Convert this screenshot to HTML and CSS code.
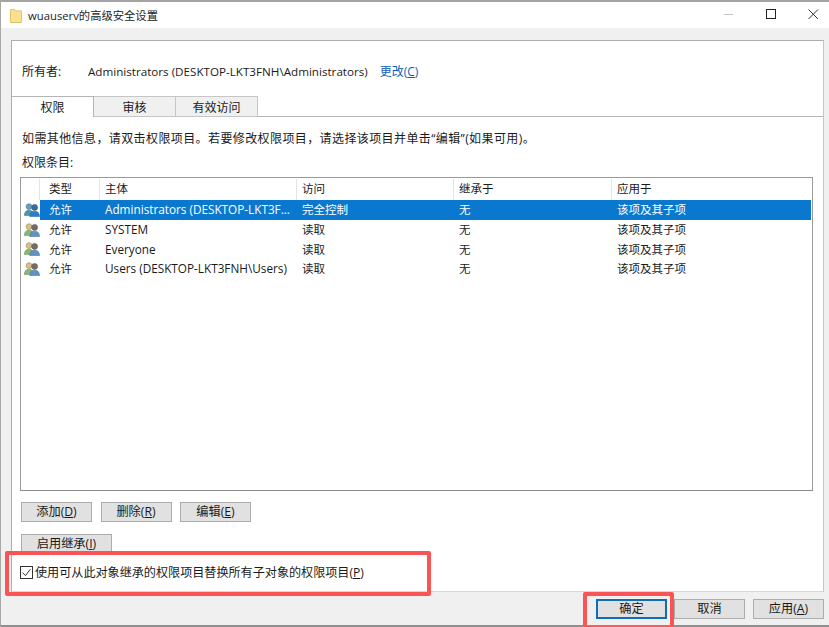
FILE: index.html
```html
<!DOCTYPE html>
<html lang="zh-CN">
<head>
<meta charset="utf-8">
<title>wuauserv的高级安全设置</title>
<link rel="stylesheet" href="styles.css">
</head>
<body>
<svg class="defs" width="0" height="0" aria-hidden="true">
  <defs>
    <symbol id="users" viewBox="0 0 16 14">
      <circle cx="5" cy="3.6" r="2.9" fill="#d9c084" stroke="#8f8f6a" stroke-width=".6"/>
      <path d="M.4 12.6c0-3.6 1.6-5.4 4.6-5.4s4.4 1.8 4.4 5.4z" fill="#8fb573" stroke="#6f8f60" stroke-width=".6"/>
      <circle cx="10.6" cy="4.4" r="3" fill="#7a6a58" stroke="#54616e" stroke-width=".6"/>
      <path d="M5.8 13.6c0-3.6 1.8-5.4 4.8-5.4s4.9 1.8 4.9 5.4z" fill="#5f93c4" stroke="#47729c" stroke-width=".6"/>
    </symbol>
    <symbol id="users-sel" viewBox="0 0 16 14">
      <circle cx="5" cy="3.6" r="2.9" fill="#6d9dbb" stroke="#4d7b9c" stroke-width=".6"/>
      <path d="M.4 12.6c0-3.6 1.6-5.4 4.6-5.4s4.4 1.8 4.4 5.4z" fill="#4f93a8" stroke="#3f7c92" stroke-width=".6"/>
      <circle cx="10.6" cy="4.4" r="3" fill="#3a6a98" stroke="#2f5f8c" stroke-width=".6"/>
      <path d="M5.8 13.6c0-3.6 1.8-5.4 4.8-5.4s4.9 1.8 4.9 5.4z" fill="#2f7cc4" stroke="#2766a4" stroke-width=".6"/>
    </symbol>
  </defs>
</svg>
<div class="window">
  <header class="titlebar">
    <svg class="folder" width="12" height="15" viewBox="0 0 12 15" aria-hidden="true">
      <path d="M.5 1.5h4l1 1.4h6v11.6H.5z" fill="#fbe08f" stroke="#e2c368"/>
    </svg>
    <span class="title">wuauserv的高级安全设置</span>
    <div class="controls">
      <svg class="ctl" width="42" height="12" viewBox="0 0 42 12" aria-hidden="true"><path d="M0 5.5h9" stroke="#c4c4c4" stroke-width="1"/></svg>
      <svg class="ctl" width="42" height="12" viewBox="0 0 42 12" aria-hidden="true"><rect x=".5" y=".5" width="9" height="9" fill="none" stroke="#222"/></svg>
      <svg class="ctl" width="11" height="12" viewBox="0 0 11 12" aria-hidden="true"><path d="M.5 .5l9.5 9.5M10 .5L.5 10" fill="none" stroke="#333"/></svg>
    </div>
  </header>

  <main class="panel">
    <div class="owner">
      <span class="owner-label">所有者:</span>
      <span class="latin">Administrators (DESKTOP-LKT3FNH\Administrators)</span>
      <a class="link">更改(<u>C</u>)</a>
    </div>

    <nav class="tabs">
      <span class="tab active">权限</span>
      <span class="tab">审核</span>
      <span class="tab">有效访问</span>
    </nav>

    <section class="content">
      <p class="hint">如需其他信息，请双击权限项目。若要修改权限项目，请选择该项目并单击“编辑”(如果可用)。</p>
      <p class="list-label">权限条目:</p>

      <div class="list">
        <div class="row head">
          <span class="cell"></span>
          <span class="cell">类型</span>
          <span class="cell">主体</span>
          <span class="cell">访问</span>
          <span class="cell">继承于</span>
          <span class="cell">应用于</span>
        </div>
        <div class="row item selected">
          <svg class="user-icon" aria-hidden="true"><use href="#users-sel"/></svg>
          <span class="cell">允许</span>
          <span class="cell name">Administrators (DESKTOP-LKT3F...</span>
          <span class="cell">完全控制</span>
          <span class="cell">无</span>
          <span class="cell">该项及其子项</span>
        </div>
        <div class="row item">
          <svg class="user-icon" aria-hidden="true"><use href="#users"/></svg>
          <span class="cell">允许</span>
          <span class="cell name">SYSTEM</span>
          <span class="cell">读取</span>
          <span class="cell">无</span>
          <span class="cell">该项及其子项</span>
        </div>
        <div class="row item">
          <svg class="user-icon" aria-hidden="true"><use href="#users"/></svg>
          <span class="cell">允许</span>
          <span class="cell name">Everyone</span>
          <span class="cell">读取</span>
          <span class="cell">无</span>
          <span class="cell">该项及其子项</span>
        </div>
        <div class="row item">
          <svg class="user-icon" aria-hidden="true"><use href="#users"/></svg>
          <span class="cell">允许</span>
          <span class="cell name">Users (DESKTOP-LKT3FNH\Users)</span>
          <span class="cell">读取</span>
          <span class="cell">无</span>
          <span class="cell">该项及其子项</span>
        </div>
      </div>

      <div class="actions">
        <button class="btn">添加(<u>D</u>)</button>
        <button class="btn">删除(<u>R</u>)</button>
        <button class="btn">编辑(<u>E</u>)</button>
      </div>
      <div class="inherit">
        <button class="btn wide">启用继承(<u>I</u>)</button>
      </div>
      <label class="replace">
        <svg class="check" width="13" height="13" viewBox="0 0 13 13" aria-hidden="true">
          <rect x=".5" y=".5" width="12" height="12" fill="#fff" stroke="#333"/>
          <path d="M2.6 6.6l2.8 3 5-6.4" fill="none" stroke="#333" stroke-width="1"/>
        </svg>
        <span>使用可从此对象继承的权限项目替换所有子对象的权限项目(<u>P</u>)</span>
      </label>
    </section>
  </main>

  <footer class="footer">
    <button class="btn primary">确定</button>
    <button class="btn">取消</button>
    <button class="btn">应用(<u>A</u>)</button>
  </footer>
</div>
<div class="mark mark-check"></div>
<div class="mark mark-ok"></div>
</body>
</html>
```
FILE: styles.css
```css
* { box-sizing: border-box; }
html, body { margin: 0; padding: 0; }
body {
  width: 829px;
  height: 627px;
  overflow: hidden;
  position: relative;
  font-family: "Open Sans", "Noto Sans CJK SC", sans-serif;
  font-size: 12px;
  color: #1a1a1a;
  background: #f0f0f0;
}
.defs { position: absolute; }
.window {
  width: 829px;
  height: 627px;
  display: flex;
  flex-direction: column;
  border-top: 2px solid #a3a3a3;
  border-left: 1px solid #a8a8a8;
  border-bottom: 2px solid #8f8f8f;
  background: #f0f0f0;
}
.titlebar {
  height: 26px;
  flex: none;
  display: flex;
  align-items: center;
  padding-left: 9px;
  background: #fff;
}
.folder { flex: none; }
.title { margin-left: 6px; font-size: 11.3px; color: #222; }
.controls { margin-left: auto; display: flex; align-items: center; padding-right: 10px; }
.ctl { flex: none; display: block; }
.panel {
  margin: 12px 5px 0 10px;
  height: 552px;
  flex: none;
  background: #fff;
  border: 1px solid #adadad;
  border-right-color: #c4c4c4;
  border-bottom-color: #d6d6d6;
  display: flex;
  flex-direction: column;
}
.owner {
  height: 55px;
  flex: none;
  display: flex;
  align-items: flex-end;
  padding: 0 0 16px 10px;
  line-height: 16px;
}
.owner-label { width: 66px; }
.latin { font-size: 11.65px; }
.link { margin-left: 12px; color: #0f5fb5; }
.tabs {
  height: 21px;
  flex: none;
  display: flex;
  border-bottom: 1px solid #b4b4b4;
}
.tab {
  width: 82px;
  height: 21px;
  display: flex;
  align-items: center;
  justify-content: center;
  background: #f0f0f0;
  border: 1px solid #c6c6c6;
  border-left: 0;
}
.tab.active {
  background: #fff;
  border-color: #b4b4b4;
  border-bottom: 0;
  position: relative;
  z-index: 1;
}
.content { flex: 1; padding: 0 10px 0 8px; min-height: 0; }
.hint { margin: 13px 0 0 2px; line-height: 17px; letter-spacing: .4px; }
.list-label { margin: 7px 0 0 2px; line-height: 17px; }
.list {
  margin-top: 6px;
  height: 314px;
  background: #fff;
  border: 1px solid #9a9a9a;
  border-bottom-color: #8a8a8a;
  padding-right: 1px;
  font-size: 11.5px;
}
.row {
  display: grid;
  grid-template-columns: 19px 60px 197px 157px 158px 1fr;
  align-items: center;
}
.head { height: 22px; }
.head .cell { height: 21px; line-height: 20px; border-right: 1px solid #e4e4e4; }
.head .cell:last-child { border-right: 0; }
.cell { padding-left: 5px; white-space: nowrap; overflow: hidden; }
.row .cell:nth-child(2) { padding-left: 9px; }
.cell.name { font-size: 11.75px; }
.item { height: 19.7px; line-height: 19px; }
.selected { background: linear-gradient(#0b78d0, #0b78d0) 19px 0 / 100% 100% no-repeat; color: #fff; }
.user-icon { width: 16px; height: 14px; margin-left: 3px; }
.actions { display: flex; gap: 8.5px; margin: 11px 0 0 1px; }
.inherit { margin: 12px 0 0 1px; }
.btn {
  width: 71px;
  height: 20px;
  padding: 0 0 1px;
  background: #e1e1e1;
  border: 1px solid #adadad;
  font: inherit;
  font-size: 12.2px;
  color: #1a1a1a;
  line-height: 16px;
}
.wide { width: 91px; }
.replace { display: flex; align-items: center; gap: 2px; margin: 10px 0 0 0; height: 16px; font-size: 12.1px; }
.check { flex: none; }
.footer {
  flex: 1;
  display: flex;
  justify-content: flex-end;
  align-items: flex-start;
  gap: 8px;
  padding: 7px 5px 0 0;
}
.primary { border: 2px solid #0f6cb8; margin-right: -1px; }
.mark {
  position: absolute;
  border: 4px solid #fb5456;
  border-radius: 2px;
  pointer-events: none;
}
.mark-check { left: 5px; top: 551px; width: 426px; height: 45px; }
.mark-ok { left: 583px; top: 592px; width: 91px; height: 38px; }
```
